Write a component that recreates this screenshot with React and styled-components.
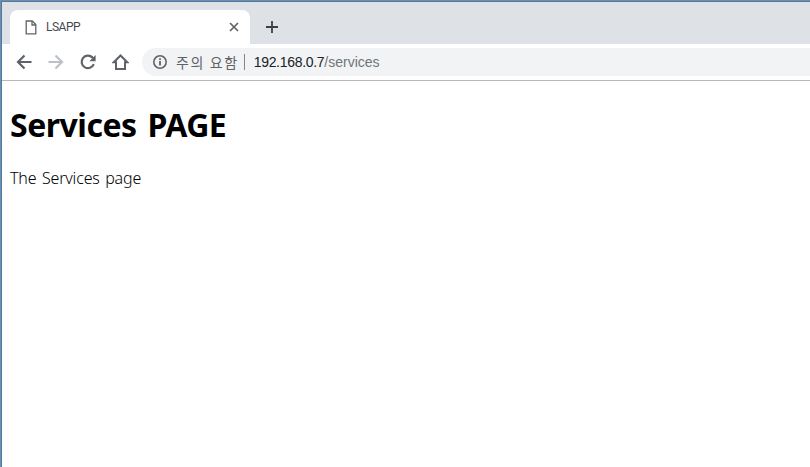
import styled, {createGlobalStyle} from 'styled-components';

const GlobalStyle = createGlobalStyle`
  html, body {
    margin: 0;
    height: 100%;
    background: #fff;
  }
  #root {
    height: 100%;
  }
`;

const Window = styled.div`
  box-sizing: border-box;
  width: 810px;
  height: 467px;
  overflow: hidden;
  border-top: 1px solid #85898e;
  border-left: 1px solid #85898e;
`;

const Frame = styled.div`
  box-sizing: border-box;
  height: 100%;
  display: flex;
  flex-direction: column;
  background: #fff;
  border-top: 1px solid #3a80c0;
  border-left: 1px solid #3a80c0;
`;

const TabStrip = styled.div`
  height: 42px;
  flex: none;
  background: #dee1e6;
  display: flex;
  align-items: flex-end;
  padding-left: 8px;
`;

const Tab = styled.div`
  box-sizing: border-box;
  width: 240px;
  height: 34px;
  background: #fff;
  border-radius: 8px 8px 0 0;
  display: flex;
  align-items: center;
  padding: 0 11px 0 15px;
`;

const TabTitle = styled.span`
  flex: 1;
  margin-left: 9px;
  font: 12px Roboto, Arial, sans-serif;
  letter-spacing: -0.5px;
  color: #45494f;
`;

const NewTab = styled.button`
  width: 28px;
  height: 28px;
  margin: 0 0 3px 8px;
  padding: 0;
  border: 0;
  background: none;
  display: flex;
  align-items: center;
  justify-content: center;
`;

const Toolbar = styled.div`
  box-sizing: border-box;
  height: 37px;
  flex: none;
  background: #fff;
  border-bottom: 1px solid #b8b8b8;
  display: flex;
  align-items: center;
  padding: 0 0 1px 12px;
  gap: 12px;
`;

const NavButton = styled.button`
  width: 20px;
  height: 20px;
  padding: 0;
  border: 0;
  background: none;
  display: flex;
  align-items: center;
  justify-content: center;
`;

const Omnibox = styled.div`
  flex: 1;
  height: 28px;
  background: #f1f3f4;
  border-radius: 14px 0 0 14px;
  display: flex;
  align-items: center;
  padding-left: 10px;
  white-space: nowrap;
`;

const Warning = styled.span`
  margin-left: 8px;
  font: 14px 'Noto Sans CJK KR', sans-serif;
  color: #5f6368;
  letter-spacing: 1.6px;
`;

const Divider = styled.span`
  width: 1px;
  height: 16px;
  margin: 0 9px 0 5px;
  background: #80868b;
`;

const Host = styled.span`
  font: 14px 'Liberation Sans', Arial, sans-serif;
  letter-spacing: -0.3px;
  color: #202124;
`;

const Path = styled.span`
  font: 14px 'Liberation Sans', Arial, sans-serif;
  color: #70757a;
`;

const Page = styled.main`
  flex: 1;
  padding: 0 8px;
  font-family: 'Noto Sans', 'Open Sans', sans-serif;
  color: #000;
`;

const Heading = styled.h1`
  margin: 20px 0 0;
  font-size: 32px;
  line-height: 48px;
  font-weight: 700;
  letter-spacing: -0.5px;
  word-spacing: 3px;
`;

const Text = styled.p`
  margin: 17px 0 0;
  font-size: 16px;
  line-height: 24px;
  font-weight: 300;
  letter-spacing: -0.16px;
  word-spacing: 1.5px;
`;

function FileIcon() {
  return (
    <svg width='12' height='15' viewBox='0 0 12 15' fill='none' stroke='#5f6368' strokeWidth='1.3'>
      <path d='M1.2 1h6l3.6 3.6v9.2h-9.6z' />
      <path d='M7 1v4h3.8' />
    </svg>
  );
}

function CloseIcon() {
  return (
    <svg width='10' height='10' viewBox='0 0 10 10' stroke='#5f6368' strokeWidth='1.7'>
      <path d='M1 1l8 8M9 1l-8 8' />
    </svg>
  );
}

function PlusIcon() {
  return (
    <svg width='12' height='12' viewBox='0 0 12 12' stroke='#3c4043' strokeWidth='1.8'>
      <path d='M6 0v12M0 6h12' />
    </svg>
  );
}

function ArrowIcon({color, flip}) {
  return (
    <svg width='16' height='16' viewBox='0 0 16 16' fill='none' stroke={color} strokeWidth='2.2' style={flip ? {transform: 'scaleX(-1)'} : undefined}>
      <path d='M15.5 8H2M8.5 1.5L2 8l6.5 6.5' />
    </svg>
  );
}

function ReloadIcon() {
  return (
    <svg width='16' height='16' viewBox='0 0 16 16' fill='none' stroke='#5f6368' strokeWidth='2.2'>
      <path d='M13.8 10.2A6.3 6.3 0 1 1 12.4 3.4L14 5.2' />
      <path d='M15.6 1v6.2H9.4z' fill='#5f6368' stroke='none' />
    </svg>
  );
}

function HomeIcon() {
  return (
    <svg width='17' height='16' viewBox='0 0 17 16' fill='none' stroke='#5f6368' strokeWidth='2'>
      <path d='M8.5 1.5L1.8 8.2H4V15H13V8.2H15.2Z' />
    </svg>
  );
}

function InfoIcon() {
  return (
    <svg width='16' height='16' viewBox='0 0 16 16' fill='none'>
      <circle cx='8' cy='8' r='6.2' stroke='#5f6368' strokeWidth='1.6' />
      <path d='M8 7v4.6M8 4.2v1.7' stroke='#5f6368' strokeWidth='1.8' />
    </svg>
  );
}

export default function App() {
  return (
    <>
      <GlobalStyle />
      <Window>
        <Frame>
          <TabStrip>
            <Tab>
              <FileIcon />
              <TabTitle>LSAPP</TabTitle>
              <CloseIcon />
            </Tab>
            <NewTab>
              <PlusIcon />
            </NewTab>
          </TabStrip>
          <Toolbar>
            <NavButton><ArrowIcon color='#5f6368' /></NavButton>
            <NavButton><ArrowIcon color='#bdc1c6' flip /></NavButton>
            <NavButton><ReloadIcon /></NavButton>
            <NavButton><HomeIcon /></NavButton>
            <Omnibox>
              <InfoIcon />
              <Warning>주의 요함</Warning>
              <Divider />
              <Host>192.168.0.7</Host>
              <Path>/services</Path>
            </Omnibox>
          </Toolbar>
          <Page>
            <Heading>Services PAGE</Heading>
            <Text>The Services page</Text>
          </Page>
        </Frame>
      </Window>
    </>
  );
}
